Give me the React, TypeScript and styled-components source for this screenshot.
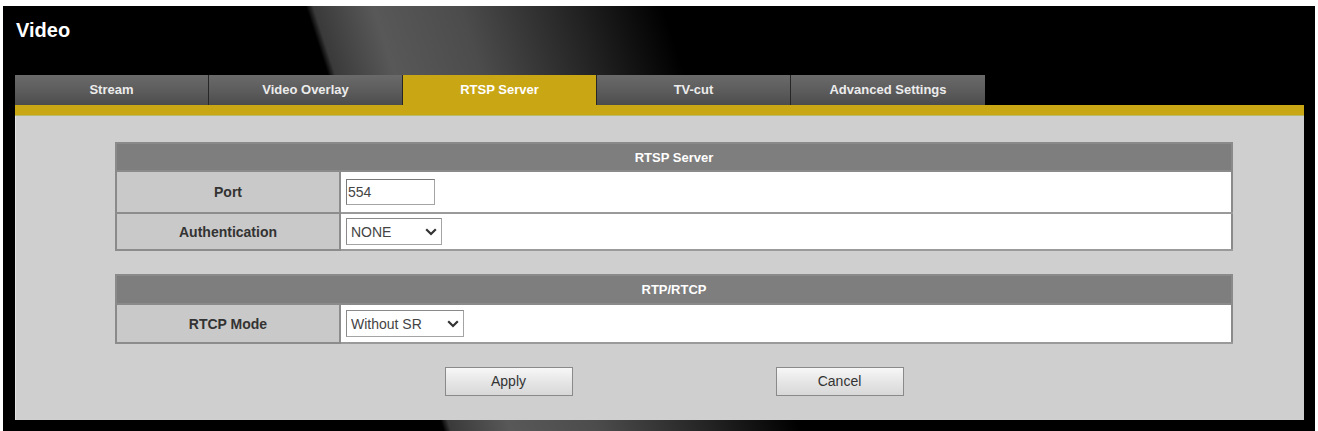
import React from "react";
import styled, { createGlobalStyle } from "styled-components";

const GlobalStyle = createGlobalStyle`
    html, body {
        margin: 0;
        background: #ffffff;
        font-family: "Liberation Sans", Arial, sans-serif;
    }
`;

const tabs = ["Stream", "Video Overlay", "RTSP Server", "TV-cut", "Advanced Settings"];

const Frame = styled.div`
    margin: 6px 3px 0 3px;
    padding: 0 11px 11px 12px;
    background: linear-gradient(72deg,
        #000 0%, #000 30.4%, #3a3a3a 30.9%, #585858 35%,
        #4c4c4c 41%, #222 49%, #000 55%, #000 100%);
`;

const Header = styled.div`
    height: 69px;
    box-sizing: border-box;
    padding: 12px 0 0 1px;
`;

const Title = styled.h1`
    margin: 0;
    color: #fff;
    font-size: 20px;
    line-height: 24px;
    font-weight: bold;
`;

const TabBar = styled.div`
    display: flex;
    height: 30px;
`;

const Tab = styled.div<{ $active: boolean }>`
    width: 194px;
    display: flex;
    align-items: center;
    justify-content: center;
    box-sizing: border-box;
    border-right: 1px solid #262626;
    background: ${p => p.$active
        ? "#c9a614"
        : "linear-gradient(#6a6a6a, #5a5a5a 60%, #4c4c4c)"};
    color: ${p => p.$active ? "#ffffff" : "#ececec"};
    font-size: 13px;
    font-weight: bold;
    padding-bottom: 2px;

    &:last-child {
        border-right: none;
    }
`;

const YellowBar = styled.div`
    height: 11px;
    box-sizing: border-box;
    background: #c9a614;
    border-bottom: 1px solid #b9bb6a;
`;

const Panel = styled.div`
    height: 304px;
    box-sizing: border-box;
    background: #cfcfcf;
    border-left: 1px solid #e2e2e2;
    padding: 26px 71px 0 99px;
    display: flex;
    flex-direction: column;
    gap: 23px;
`;

const Table = styled.table`
    width: 100%;
    border-collapse: collapse;
    border: 2px solid #8a8a8a;
`;

const HeadCell = styled.th<{ $h: number }>`
    height: ${p => p.$h}px;
    padding: 0;
    background: #7e7e7e;
    color: #fff;
    font-size: 13px;
    font-weight: bold;
    text-align: center;
    border-bottom: 2px solid #8a8a8a;
`;

const Row = styled.tr<{ $h: number }>`
    height: ${p => p.$h}px;
`;

const LabelCell = styled.td`
    width: 222px;
    padding: 0;
    background: #c9c9c9;
    color: #333;
    font-size: 14px;
    font-weight: bold;
    text-align: center;
    border: 2px solid #8c8c8c;
    border-left: none;
`;

const ValueCell = styled.td`
    padding: 0 0 0 5px;
    background: #fff;
    border-top: 2px solid #9a9a9a;
    border-bottom: 2px solid #9a9a9a;
`;

const TextInput = styled.input`
    display: block;
    width: 89px;
    height: 26px;
    box-sizing: border-box;
    margin: 0;
    padding: 0 1px;
    border: 1px solid #a4a4a4;
    border-top-color: #7a7a7a;
    border-left-color: #7a7a7a;
    font-family: "Liberation Sans", Arial, sans-serif;
    font-size: 14px;
    color: #444;
    background: #fff;
`;

const SelectWrap = styled.span`
    position: relative;
    display: inline-block;
    vertical-align: middle;
`;

const Select = styled.select<{ $w: number }>`
    appearance: none;
    display: block;
    width: ${p => p.$w}px;
    height: 27px;
    box-sizing: border-box;
    margin: 0;
    padding: 0 0 0 4px;
    border: 1px solid #a4a4a4;
    border-top-color: #8a8a8a;
    border-left-color: #8a8a8a;
    border-radius: 0;
    background: #fff;
    font-family: "Liberation Sans", Arial, sans-serif;
    font-size: 14px;
    color: #444;
`;

const Chevron = styled.svg`
    position: absolute;
    right: 5px;
    top: 10px;
    pointer-events: none;
`;

const Buttons = styled.div`
    display: flex;
    justify-content: center;
    gap: 203px;
`;

const Button = styled.button`
    width: 128px;
    height: 29px;
    margin: 0;
    border: 1px solid #8a8a8a;
    border-radius: 0;
    background: linear-gradient(#f7f7f7, #e6e6e6 50%, #d8d8d8);
    font-family: "Liberation Sans", Arial, sans-serif;
    font-size: 14px;
    color: #333;
    padding: 0 0 2px 0;
`;

const DropDown = ({ value, width }: { value: string; width: number }) => (
    <SelectWrap>
        <Select $w={width} defaultValue={value}>
            <option>{value}</option>
        </Select>
        <Chevron width="12" height="8" viewBox="0 0 12 8" fill="none">
            <path d="M1.2 1.2 L6 6 L10.8 1.2" stroke="#333" strokeWidth="2.2" />
        </Chevron>
    </SelectWrap>
);

export default function App() {
    return (
        <>
            <GlobalStyle />
            <Frame>
                <Header>
                    <Title>Video</Title>
                </Header>
                <TabBar>
                    {tabs.map(t => (
                        <Tab key={t} $active={t === "RTSP Server"}>{t}</Tab>
                    ))}
                </TabBar>
                <YellowBar />
                <Panel>
                    <Table>
                        <thead>
                            <tr>
                                <HeadCell $h={26} colSpan={2}>RTSP Server</HeadCell>
                            </tr>
                        </thead>
                        <tbody>
                            <Row $h={42}>
                                <LabelCell>Port</LabelCell>
                                <ValueCell>
                                    <TextInput defaultValue="554" />
                                </ValueCell>
                            </Row>
                            <Row $h={37}>
                                <LabelCell>Authentication</LabelCell>
                                <ValueCell>
                                    <DropDown value="NONE" width={96} />
                                </ValueCell>
                            </Row>
                        </tbody>
                    </Table>
                    <Table>
                        <thead>
                            <tr>
                                <HeadCell $h={27} colSpan={2}>RTP/RTCP</HeadCell>
                            </tr>
                        </thead>
                        <tbody>
                            <Row $h={39}>
                                <LabelCell>RTCP Mode</LabelCell>
                                <ValueCell>
                                    <DropDown value="Without SR" width={118} />
                                </ValueCell>
                            </Row>
                        </tbody>
                    </Table>
                    <Buttons>
                        <Button type="button">Apply</Button>
                        <Button type="button">Cancel</Button>
                    </Buttons>
                </Panel>
            </Frame>
        </>
    );
}
